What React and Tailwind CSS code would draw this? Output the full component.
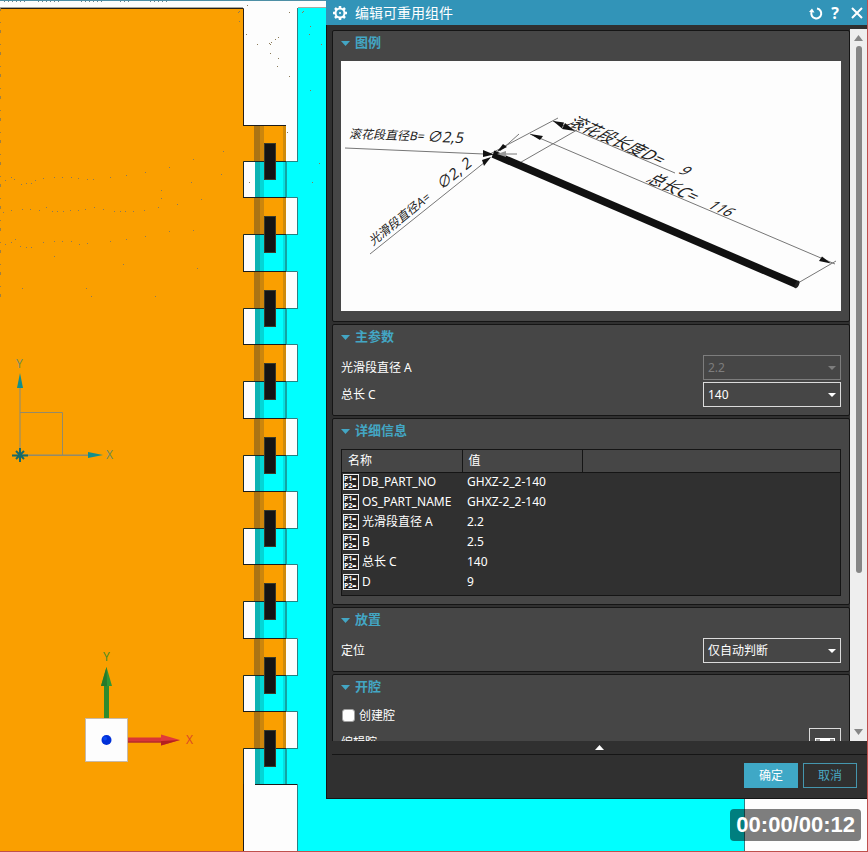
import { useState } from 'react';

const TEETH = Array.from({ length: 9 }, (_, i) => 125 + Math.round(i * 73.4));

const SPECKS = [
  [14, 179], [11, 177], [5, 180], [21, 184], [26, 183], [31, 183], [35, 180], [43, 178], [54, 177], [62, 177],
  [71, 177], [78, 178], [87, 179], [93, 179], [110, 177], [126, 175], [145, 172], [169, 167], [193, 159], [223, 151],
  [3, 212], [11, 210], [22, 209], [30, 209], [39, 210], [46, 207], [52, 211], [57, 211], [63, 211], [70, 210],
  [78, 210], [85, 209], [94, 207], [103, 209], [114, 211], [120, 211], [125, 211], [133, 211], [144, 210], [158, 207],
  [177, 204], [201, 199], [5, 244], [11, 242], [15, 239], [20, 246], [26, 247], [31, 247], [43, 242], [54, 241],
  [62, 241], [71, 241], [79, 244], [87, 243], [110, 241], [126, 239], [145, 236], [169, 231], [193, 230], [54, 256],
  [123, 264], [197, 268], [22, 288], [86, 288], [91, 296], [155, 296], [161, 190], [161, 198], [191, 182], [221, 174],
  [246, 34], [257, 44], [269, 43], [270, 44], [271, 42], [275, 39], [278, 37], [270, 53], [278, 58], [277, 66],
  [289, 76], [289, 12], [247, 5], [310, 26], [309, 34], [321, 44], [310, 90], [319, 163], [312, 182], [302, 12],
  [303, 11], [238, 12], [239, 11], [239, 21], [287, 132], [249, 182],
];

const PROPERTIES = [
  { name: 'DB_PART_NO', value: 'GHXZ-2_2-140' },
  { name: 'OS_PART_NAME', value: 'GHXZ-2_2-140' },
  { name: '光滑段直径 A', value: '2.2' },
  { name: 'B', value: '2.5' },
  { name: '总长 C', value: '140' },
  { name: 'D', value: '9' },
];

const Tooth = ({ y }) => (
  <g>
    {/* orange half of the hinge */}
    <rect x="243" y={y} width="43" height="37" fill="#fa9f00" />
    <rect x="254" y={y} width="6" height="37" fill="#ab7414" />
    <rect x="260" y={y} width="4" height="37" fill="#cc860c" />
    <rect x="283" y={y} width="3" height="37" fill="#cf8a0b" />
    {/* cyan half */}
    <rect x="255" y={y + 37} width="43" height="36" fill="#00ffff" />
    <rect x="255" y={y + 37} width="5" height="36" fill="#0bb2b2" />
    <rect x="260" y={y + 37} width="4" height="36" fill="#04d6d6" />
    <rect x="283" y={y + 37} width="2" height="36" fill="#05e0e0" />
    <rect x="285" y={y + 37} width="2" height="36" fill="#12a5a5" />
    <path d={`M243.5 ${y + 73}V${y + 36.5}H286`} fill="none" stroke="#1c2a26" />
    <path d={`M286 ${y + 36.5}H297.5`} fill="none" stroke="#1f8585" />
    <rect x="264.5" y={y + 18.5} width="11" height="36" fill="#141414" stroke="#3b3b2a" />
  </g>
);

const Viewport = () => (
  <svg className="absolute inset-0 h-full w-full" aria-hidden="true">
    <rect width="100%" height="100%" fill="#fdfdfd" />
    <rect x="0" y="8" width="243" height="100%" fill="#fa9f00" />
    <rect x="298" y="8" width="447" height="100%" fill="#00ffff" />
    <path d="M0 .5H326" stroke="#4d8fa5" />
    <path d="M4 1.5H26M38 1.5H60M81 1.5H104M120 1.5H132M150 1.5H170" stroke="#6d8790" strokeDasharray="1 3" />
    <path d="M0 7.5H243M298 7.5H326" stroke="#a8a8a0" />
    <path d="M0 8.5H243.5V125.5H286" fill="none" stroke="#2a2015" />
    <path d="M297.5 8V162M744.5 798V852" stroke="#2e7f82" fill="none" />
    {TEETH.map((y) => (
      <Tooth key={y} y={y} />
    ))}
    <path d="M243 125.5H286" stroke="#1c1c1c" />
    {TEETH.slice(1).map((y) => (
      <g key={y} fill="none">
        <path d={`M243 ${y - 0.5}H286`} stroke="#1c1c1c" />
        <path d={`M286 ${y - 0.5}H297.5V${y + 37}`} stroke="#2e7f82" />
      </g>
    ))}
    <path d="M243.5 784V852M255 784.5H297" stroke="#1c1c1c" />
    <path d="M297.5 784V852" stroke="#2e7f82" />
    {SPECKS.map(([x, y]) => (
      <rect key={`${x}-${y}`} x={x} y={y} width="1" height="1" fill="#8a7a58" />
    ))}
    <path d="M.5 8V300" stroke="#a08040" strokeDasharray="3 11 1 7" />

    {/* sketch coordinate system */}
    <path d="M20 455V386M20 455H88" stroke="#bf953f" strokeWidth="2" />
    <path d="M20 412.5H62.5V455M20 455.5H88" fill="none" stroke="#948a68" />
    <path d="M20 373L23 388H17Z" fill="#128f8c" />
    <path d="M103 455L88 452V458Z" fill="#128f8c" />
    <path d="M12 455.5H28M20 448V462M16 451L24 459M24 451L16 459" stroke="#176a67" strokeWidth="2" />
    <text x="16" y="368" fontSize="12" fill="#6f8b5f">Y</text>
    <text x="106" y="459" fontSize="12" fill="#6f8b5f">X</text>

    {/* view triad */}
    <path d="M106.5 719V684" stroke="#2e8b2e" strokeWidth="5" />
    <path d="M106.5 667L112 686H101Z" fill="#2f9636" />
    <path d="M106.5 667L107 686H101Z" fill="#267a2b" />
    <path d="M128 740H162" stroke="#d93636" strokeWidth="5" />
    <path d="M128 742H162" stroke="#a32626" />
    <path d="M180 740L161 734.500V745.500Z" fill="#e03a3a" />
    <path d="M180 740L161 741V745.500Z" fill="#b32020" />
    <rect x="85.500" y="718.500" width="42" height="43" fill="#fdfdfd" stroke="#c7b9a8" />
    <circle cx="106.500" cy="740" r="5" fill="#0030d8" />
    <circle cx="105" cy="738.500" r="2" fill="#0a48f0" />
    <text x="103" y="661" fontSize="12" fill="#4e8c24">Y</text>
    <text x="186" y="744" fontSize="12" fill="#dc4a26">X</text>
  </svg>
);

const Legend = () => (
  <svg viewBox="341 61 500 250" className="block w-full bg-[#fdfdfd]" role="img" aria-label="图例">
    <g fill="none" stroke="#777">
      <path d="M345 148L484 154" />
      <path d="M370 254L490 158" />
      <path d="M490 154L558 118M500 151L519 134M494 154H517" />
      <path d="M516 165L577 130" />
      <path d="M553 121L675 173" />
      <path d="M530 134L835 264" />
      <path d="M798 283L836 261" />
    </g>
    <path d="M493 154L797 284.500" stroke="#111" strokeWidth="7.500" />
    <ellipse cx="797" cy="284.500" rx="2" ry="4" transform="rotate(24 797 284.500)" fill="#222" />
    <g fill="#111">
      <path d="M494 154.500L483 150V157Z" />
      <path d="M491 157L482 160L484 166Z" />
      <path d="M497 152L503 144L507 147Z" />
      <path d="M497 154L506 151V157Z" fill="#999" />
      <path d="M553 121L564 122.500L562 128.500Z" />
      <path d="M575 131L562 129L565 123Z" />
      <path d="M530 134L543 136L540 140Z" />
      <path d="M831 263.500L819 261L822 256.500Z" />
    </g>
    <g fill="#222">
      <g transform="translate(349 138) rotate(2) skewX(-12)">
        <text fontSize="12">滚花段直径B=</text>
        <text x="78" y="1" fontSize="15">∅2,5</text>
      </g>
      <g transform="translate(373 246) rotate(-39) skewX(-12)">
        <text fontSize="12">光滑段直径A=</text>
        <text x="88" fontSize="15">∅2, 2</text>
      </g>
      <g transform="translate(566 124) rotate(24) skewX(-30)">
        <text fontSize="16">滚花段长度D=</text>
        <text x="121" y="-1" fontSize="14">9</text>
      </g>
      <g transform="translate(645 181) rotate(24) skewX(-30)">
        <text fontSize="16">总长C=</text>
        <text x="66" y="-1" fontSize="14">116</text>
      </g>
    </g>
  </svg>
);

const Section = ({ title, children }) => {
  const [open, setOpen] = useState(true);
  return (
    <section className="shrink-0 rounded-xs border border-[#151515] bg-[#464646] px-2 pb-2">
      <h2>
        <button
          type="button"
          aria-expanded={open}
          onClick={() => setOpen(!open)}
          className="flex h-6 w-full items-center gap-[5px] text-[13px] font-bold text-[#43a6c4]"
        >
          <svg width="9" height="5" className={open ? '' : '-rotate-90'} aria-hidden="true">
            <path d="M0 0H9L4.500 5Z" fill="currentColor" />
          </svg>
          {title}
        </button>
      </h2>
      {open && <div className="mt-1.5">{children}</div>}
    </section>
  );
};

const SelectRow = ({ id, label, options, disabled = false }) => (
  <div className="flex h-[25px] items-center justify-between">
    <label htmlFor={id}>{label}</label>
    <div className={`relative h-full w-[138px] ${disabled ? 'text-[#7d7d7d]' : 'text-white'}`}>
      <select
        id={id}
        disabled={disabled}
        className="h-full w-full appearance-none border border-[#dcdcdc] bg-[#464646] px-1 opacity-100 disabled:border-[#7d7d7d]"
      >
        {options.map((o) => (
          <option key={o}>{o}</option>
        ))}
      </select>
      <svg width="8" height="4" className="pointer-events-none absolute top-[11px] right-[5px]" aria-hidden="true">
        <path d="M0 0H8L4 4Z" fill="currentColor" />
      </svg>
    </div>
  </div>
);

const ExpressionIcon = () => (
  <svg width="16" height="16" viewBox="0 0 16 16" className="shrink-0" aria-hidden="true">
    <rect x=".5" y=".5" width="15" height="15" fill="#222" stroke="#eee" />
    <text x="1" y="7" fontSize="7" fontWeight="700" fill="#fff">P1=</text>
    <text x="1" y="14" fontSize="7" fontWeight="700" fill="#fff">P2=</text>
  </svg>
);

const DetailTable = () => (
  <div className="border border-[#151515] bg-[#303030] pb-[3px]">
    <table className="w-full table-fixed border-collapse text-left">
      <thead className="bg-[#464646]">
        <tr className="h-[22px] border-b border-[#151515]">
          <th className="w-[120px] border-r border-[#151515] px-1.5 font-normal">名称</th>
          <th className="w-[120px] border-r border-[#151515] px-1.5 font-normal">值</th>
          <th></th>
        </tr>
      </thead>
      <tbody>
        {PROPERTIES.map((p) => (
          <tr key={p.name} className="h-5">
            <td className="p-0 pl-px">
              <div className="flex items-center gap-[3px] whitespace-nowrap">
                <ExpressionIcon />
                {p.name}
              </div>
            </td>
            <td className="p-0 pl-[5px]">{p.value}</td>
            <td></td>
          </tr>
        ))}
      </tbody>
    </table>
  </div>
);

const TitleBar = () => (
  <header className="flex h-[25px] shrink-0 items-center bg-[#3294b8] pr-1 pl-1.5 text-white">
    <svg width="16" height="16" viewBox="0 0 16 16" fill="none" stroke="currentColor" aria-hidden="true">
      <circle cx="8" cy="8" r="4.500" strokeWidth="2" />
      <path
        d="M8 3.500V1M8 12.500V15M3.500 8H1M12.500 8H15M4.800 4.800L3 3M11.200 4.800L13 3M4.800 11.200L3 13M11.200 11.200L13 13"
        strokeWidth="2.500"
      />
      <circle cx="8" cy="8" r="1" fill="currentColor" stroke="none" />
    </svg>
    <h1 className="ml-[7px] flex-1 text-sm">编辑可重用组件</h1>
    <div className="flex items-center gap-2">
      <button type="button" aria-label="重置">
        <svg width="14" height="14" viewBox="0 0 14 14" fill="none" stroke="currentColor" aria-hidden="true">
          <path d="M8 2.500A5 5 0 1 1 2.500 6" strokeWidth="2" />
          <path d="M0 6L3 2.500L5.500 6.500Z" fill="currentColor" stroke="none" />
        </svg>
      </button>
      <button type="button" aria-label="帮助" className="text-base leading-none font-bold">
        ?
      </button>
      <button type="button" aria-label="关闭" className="ml-1">
        <svg width="12" height="12" viewBox="0 0 12 12" fill="none" stroke="currentColor" aria-hidden="true">
          <path d="M1 1L11 11M11 1L1 11" strokeWidth="2" />
        </svg>
      </button>
    </div>
  </header>
);

const ScrollBar = () => (
  <div className="flex w-[17px] shrink-0 flex-col items-center bg-[#eeeeee] py-1.5 text-[#868686]" aria-hidden="true">
    <svg width="9" height="6">
      <path d="M0 6H9L4.500 0Z" fill="currentColor" />
    </svg>
    <div className="flex w-full flex-1 flex-col items-center py-[5px]">
      <div className="h-7/9 w-1.5 rounded-full bg-[#868686]"></div>
    </div>
    <svg width="9" height="6">
      <path d="M0 0H9L4.500 6Z" fill="currentColor" />
    </svg>
  </div>
);

const ComponentDialog = () => {
  const [createCavity, setCreateCavity] = useState(false);

  return (
    <div role="dialog" aria-label="编辑可重用组件" className="relative flex min-h-0 flex-1 flex-col bg-[#303030] text-xs text-white">
      <TitleBar />
      <div className="flex min-h-0 flex-1 flex-col border-b border-l border-[#151515]">
        <div className="mt-1 flex min-h-0 flex-1">
          <div className="flex min-w-0 flex-1 flex-col gap-0.5 overflow-hidden pt-px pl-[5px]">
            <Section title="图例">
              <div className="pb-0.5">
                <Legend />
              </div>
            </Section>
            <Section title="主参数">
              <div className="flex flex-col gap-0.5">
                <SelectRow id="diameter" label="光滑段直径 A" options={['2.2']} disabled />
                <SelectRow id="length" label="总长 C" options={['140', '116']} />
              </div>
            </Section>
            <Section title="详细信息">
              <DetailTable />
            </Section>
            <Section title="放置">
              <SelectRow id="placement" label="定位" options={['仅自动判断']} />
            </Section>
            <Section title="开腔">
              <div className="flex flex-col gap-0.5">
                <label className="flex h-[21px] items-center gap-1">
                  <input
                    type="checkbox"
                    checked={createCavity}
                    onChange={(e) => setCreateCavity(e.target.checked)}
                    className="ml-px size-[13px] appearance-none rounded-[3px] border border-[#a0a0a0] bg-white checked:bg-[#3294b8]"
                  />
                  创建腔
                </label>
                <div className="flex h-[30px] items-center justify-between">
                  <label htmlFor="edit-cavity">编辑腔</label>
                  <button id="edit-cavity" type="button" className="flex h-full w-8 justify-center border border-[#dcdcdc] pt-[9px]">
                    <svg width="20" height="14" aria-hidden="true">
                      <rect width="20" height="14" fill="#fff" />
                      <path d="M1 2H5M15 2H19" stroke="#999" strokeWidth="2" />
                    </svg>
                  </button>
                </div>
              </div>
            </Section>
          </div>
          <ScrollBar />
        </div>
        <div className="ml-[5px] flex h-3.5 shrink-0 items-center justify-center border-b border-[#151515]">
          <button type="button" aria-label="收起">
            <svg width="9" height="5" className="block" aria-hidden="true">
              <path d="M0 5H9L4.500 0Z" fill="#fff" />
            </svg>
          </button>
        </div>
        <footer className="flex shrink-0 justify-end gap-[5px] px-2.5 pt-2 pb-2.5">
          <button type="button" className="h-[25px] w-[54px] border border-[#3fa8c6] bg-[#3fa8c6]">
            确定
          </button>
          <button type="button" className="h-[25px] w-[54px] border border-[#4596ae] text-[#4aa9c4]">
            取消
          </button>
        </footer>
      </div>
    </div>
  );
};

const App = () => (
  <main className="relative flex h-screen flex-col overflow-hidden border-r border-b border-[#c0504d] pb-[52px] pl-[326px] font-['Noto_Sans','Noto_Sans_CJK_SC',sans-serif]">
    <Viewport />
    <ComponentDialog />
    <time className="absolute right-1.5 bottom-2.5 rounded-sm bg-black/50 px-1.5 font-['Liberation_Sans',sans-serif] text-[22px] leading-8 font-bold text-white">
      00:00/00:12
    </time>
  </main>
);

export default App;
